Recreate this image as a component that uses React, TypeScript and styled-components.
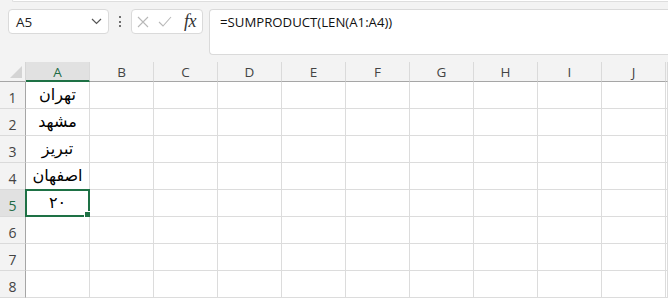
import React from "react";
import styled, { createGlobalStyle } from "styled-components";

const Global = createGlobalStyle`
  html, body { margin: 0; padding: 0; background: #f3f3f3; }
  * { box-sizing: border-box; }
`;

const Window = styled.div`
  width: 668px;
  height: 298px;
  overflow: hidden;
  background: #f3f3f3;
  font-family: "Open Sans", "Noto Sans", sans-serif;
  display: flex;
  flex-direction: column;
`;

const RibbonEdge = styled.div`
  height: 2px;
  margin-left: 12px;
  background: #ffffff;
  border-bottom: 1px solid #dedede;
  border-left: 1px solid #dedede;
  border-bottom-left-radius: 4px;
`;

const FormulaRow = styled.div`
  display: flex;
  align-items: flex-start;
  padding: 7px 0 0 8px;
  height: 60px;
`;

const Box = styled.div`
  height: 25px;
  background: #ffffff;
  border: 1px solid #dadada;
  border-radius: 4px;
  display: flex;
  align-items: center;
`;

const NameBox = styled(Box)`
  width: 101px;
  padding: 0 6px 0 7px;
  justify-content: space-between;
  font-size: 13.5px;
  color: #222;
`;

const Dots = styled.div`
  width: 22px;
  height: 25px;
  display: flex;
  flex-direction: column;
  align-items: center;
  justify-content: center;
  gap: 2.5px;
  & > span {
    width: 2px;
    height: 2px;
    background: #444;
    border-radius: 1px;
  }
`;

const FxBox = styled(Box)`
  width: 72px;
  padding: 0 4px 0 5px;
  gap: 9px;
`;

const Fx = styled.span`
  font-family: "Liberation Serif", serif;
  font-style: italic;
  font-size: 18px;
  color: #333;
  margin-left: 3px;
  letter-spacing: -0.5px;
  line-height: 1;
  padding-bottom: 2px;
`;

const FormulaBar = styled.div`
  flex: 1;
  margin-left: 6px;
  height: 46px;
  background: #ffffff;
  border: 1px solid #dadada;
  border-right: none;
  border-radius: 4px 0 0 4px;
  padding: 3px 0 0 10px;
  font-size: 13.2px;
  color: #111;
`;

const Grid = styled.div`
  display: grid;
  grid-template-columns: 26px repeat(10, 64px) 1fr;
  grid-template-rows: 20px repeat(8, 27px);
  font-family: "Open Sans", "Noto Sans", sans-serif;
`;

const Corner = styled.div`
  background: #f3f3f3;
  border-right: 1px solid #d6d6d6;
  border-bottom: 1px solid #a6a6a6;
  display: flex;
  align-items: flex-end;
  justify-content: flex-end;
  padding: 0 3px 3px 0;
`;

const ColHead = styled.div<{ $active?: boolean }>`
  background: ${(p) => (p.$active ? "#e1e1e1" : "#f3f3f3")};
  border-right: 1px solid #dadada;
  border-bottom: ${(p) => (p.$active ? "2px solid #1e7145" : "1px solid #a6a6a6")};
  display: flex;
  align-items: center;
  justify-content: center;
  font-size: 13.5px;
  color: ${(p) => (p.$active ? "#1e6b45" : "#444")};
  padding-top: ${(p) => (p.$active ? "1px" : "0")};
`;

const RowHead = styled.div<{ $active?: boolean }>`
  background: ${(p) => (p.$active ? "#e1e1e1" : "#f3f3f3")};
  border-right: 1px solid #a6a6a6;
  border-bottom: 1px solid #dadada;
  display: flex;
  align-items: flex-end;
  justify-content: center;
  padding-bottom: 1px;
  font-size: 14px;
  color: ${(p) => (p.$active ? "#1e6b45" : "#444")};
`;

const Cell = styled.div`
  position: relative;
  background: #ffffff;
  border-right: 1px solid #dcdcdc;
  border-bottom: 1px solid #dcdcdc;
  display: flex;
  align-items: flex-end;
  justify-content: center;
  padding-bottom: 2px;
  font-family: "DejaVu Sans", sans-serif;
  font-size: 16px;
  line-height: 22px;
  color: #000;
`;

const Selection = styled.div`
  position: absolute;
  left: -1px;
  top: -1px;
  right: -1px;
  bottom: -1px;
  border: 2px solid #1e7145;
  pointer-events: none;
`;

const Handle = styled.div`
  position: absolute;
  right: -4px;
  bottom: -4px;
  width: 6px;
  height: 6px;
  background: #1e7145;
  border: 1px solid #ffffff;
  box-sizing: content-box;
`;

const cols = ["A", "B", "C", "D", "E", "F", "G", "H", "I", "J", ""];
const values = ["تهران", "مشهد", "تبریز", "اصفهان", "۲۰", "", "", ""];

export default function App() {
  return (
    <Window>
      <Global />
      <RibbonEdge />
      <FormulaRow>
        <NameBox>
          <span>A5</span>
          <svg width="11" height="7" viewBox="0 0 11 7">
            <path d="M1 1 L5.5 5.5 L10 1" fill="none" stroke="#555" strokeWidth="1.2" />
          </svg>
        </NameBox>
        <Dots>
          <span />
          <span />
          <span />
        </Dots>
        <FxBox>
          <svg width="12" height="12" viewBox="0 0 12 12">
            <path d="M1 1 L11 11 M11 1 L1 11" stroke="#b8b8b8" strokeWidth="1.1" fill="none" />
          </svg>
          <svg width="14" height="11" viewBox="0 0 14 11">
            <path d="M1 6 L5 10 L13 1" stroke="#b8b8b8" strokeWidth="1.1" fill="none" />
          </svg>
          <Fx>fx</Fx>
        </FxBox>
        <FormulaBar>=SUMPRODUCT(LEN(A1:A4))</FormulaBar>
      </FormulaRow>
      <Grid>
        <Corner>
          <svg width="12" height="12" viewBox="0 0 12 12">
            <path d="M12 0 L12 12 L0 12 Z" fill="#d4d4d4" />
          </svg>
        </Corner>
        {cols.map((c, i) => (
          <ColHead key={i} $active={c === "A"}>
            {c}
          </ColHead>
        ))}
        {values.map((v, r) => (
          <React.Fragment key={r}>
            <RowHead $active={r === 4}>{r + 1}</RowHead>
            {cols.map((_, ci) => (
              <Cell key={ci}>
                {ci === 0 ? v : ""}
                {ci === 0 && r === 4 && (
                  <Selection>
                    <Handle />
                  </Selection>
                )}
              </Cell>
            ))}
          </React.Fragment>
        ))}
      </Grid>
    </Window>
  );
}
